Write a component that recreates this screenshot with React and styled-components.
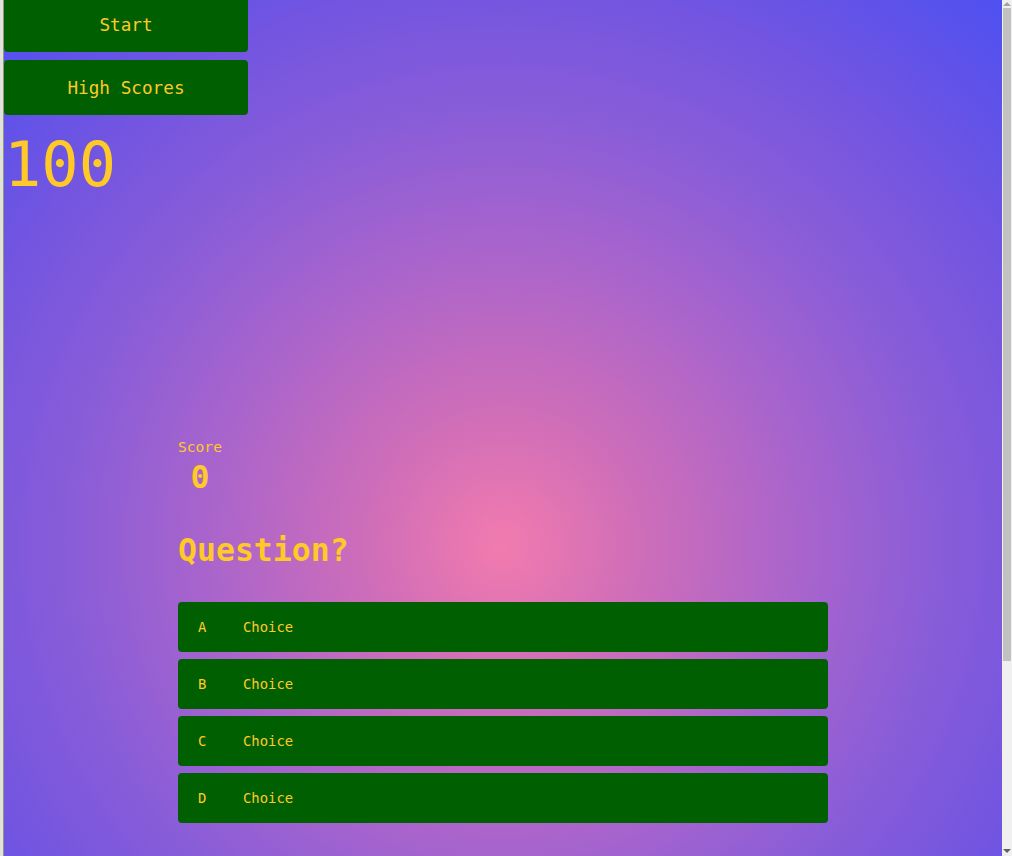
import React from 'react';
import styled, { createGlobalStyle } from 'styled-components';

const yellow = '#ffc928';
const green = '#005f00';
const mono = '"DejaVu Sans Mono", "Liberation Mono", monospace';

const GlobalStyle = createGlobalStyle`
    html, body {
        margin: 0;
        padding: 0;
        overflow: hidden;
    }
    body {
        font-family: ${mono};
        background: #e4e4dc;
    }
`;

const Window = styled.div`
    display: flex;
    height: 100vh;
`;

const EdgeStrip = styled.div`
    width: 3px;
    background: #e2e2da;
    border-right: 1px solid #8a9a86;
`;

const Page = styled.div`
    flex: 1;
    overflow: hidden;
    display: flex;
    flex-direction: column;
    background: radial-gradient(
        circle at 499px 545px,
        #f27bae 0px,
        #d06eb8 130px,
        #a864cc 300px,
        #8a5dd8 430px,
        #7355e0 560px,
        #4d50f2 745px
    );
`;

const ScrollTrack = styled.div`
    width: 10px;
    background: #f0f0f0;
    display: flex;
    flex-direction: column;
    align-items: center;
`;

const Arrow = styled.div`
    width: 0;
    height: 0;
    border-left: 4px solid transparent;
    border-right: 4px solid transparent;
    ${(p) => (p.down ? 'border-top: 4px solid #606060;' : 'border-bottom: 4px solid #a3a3a3;')}
    margin: ${(p) => (p.down ? '0 0 3px' : '2px 0 0')};
`;

const Thumb = styled.div`
    width: 8px;
    height: 653px;
    margin-top: 2px;
    background: #c1c1c1;
`;

const Spacer = styled.div`
    flex: 1;
`;

const Menu = styled.nav`
    display: flex;
    flex-direction: column;
    gap: 8px;
    width: 244px;
    margin-top: -3px;
`;

const MenuButton = styled.button`
    height: 55px;
    border: none;
    border-radius: 4px;
    background: ${green};
    color: ${yellow};
    font-family: ${mono};
    font-size: 17.7px;
    cursor: pointer;
`;

const Timer = styled.div`
    margin-top: 19px;
    font-size: 62px;
    line-height: 1;
    color: ${yellow};
`;

const Quiz = styled.main`
    width: 650px;
    margin: 242px auto 0;
    display: flex;
    flex-direction: column;
`;

const ScoreBox = styled.div`
    align-self: flex-start;
    display: flex;
    flex-direction: column;
    align-items: center;
    color: ${yellow};
`;

const ScoreLabel = styled.span`
    font-size: 14.6px;
`;

const ScoreValue = styled.span`
    margin-top: 4px;
    font-size: 31.5px;
    font-weight: bold;
`;

const Question = styled.h2`
    margin: 37px 0 34px;
    font-size: 31.5px;
    font-weight: bold;
    line-height: normal;
    color: ${yellow};
`;

const Choices = styled.ul`
    list-style: none;
    margin: 0;
    padding: 0;
    display: flex;
    flex-direction: column;
    gap: 7px;
`;

const ChoiceRow = styled.li`
    height: 50px;
    display: flex;
    align-items: center;
    padding-left: 20px;
    border-radius: 4px;
    background: ${green};
    color: ${yellow};
    font-size: 13.9px;
    cursor: pointer;
`;

const ChoiceLetter = styled.span`
    width: 45px;
`;

const App = () => {
    const letters = ['A', 'B', 'C', 'D'];

    return (
        <>
            <GlobalStyle />
            <Window>
                <EdgeStrip />
                <Page>
                    <Menu>
                        <MenuButton>Start</MenuButton>
                        <MenuButton>High Scores</MenuButton>
                    </Menu>
                    <Timer>100</Timer>
                    <Quiz>
                        <ScoreBox>
                            <ScoreLabel>Score</ScoreLabel>
                            <ScoreValue>0</ScoreValue>
                        </ScoreBox>
                        <Question>Question?</Question>
                        <Choices>
                            {letters.map((l) => (
                                <ChoiceRow key={l}>
                                    <ChoiceLetter>{l}</ChoiceLetter>
                                    <span>Choice</span>
                                </ChoiceRow>
                            ))}
                        </Choices>
                    </Quiz>
                </Page>
                <ScrollTrack>
                    <Arrow />
                    <Thumb />
                    <Spacer />
                    <Arrow down />
                </ScrollTrack>
            </Window>
        </>
    );
};

export default App;
